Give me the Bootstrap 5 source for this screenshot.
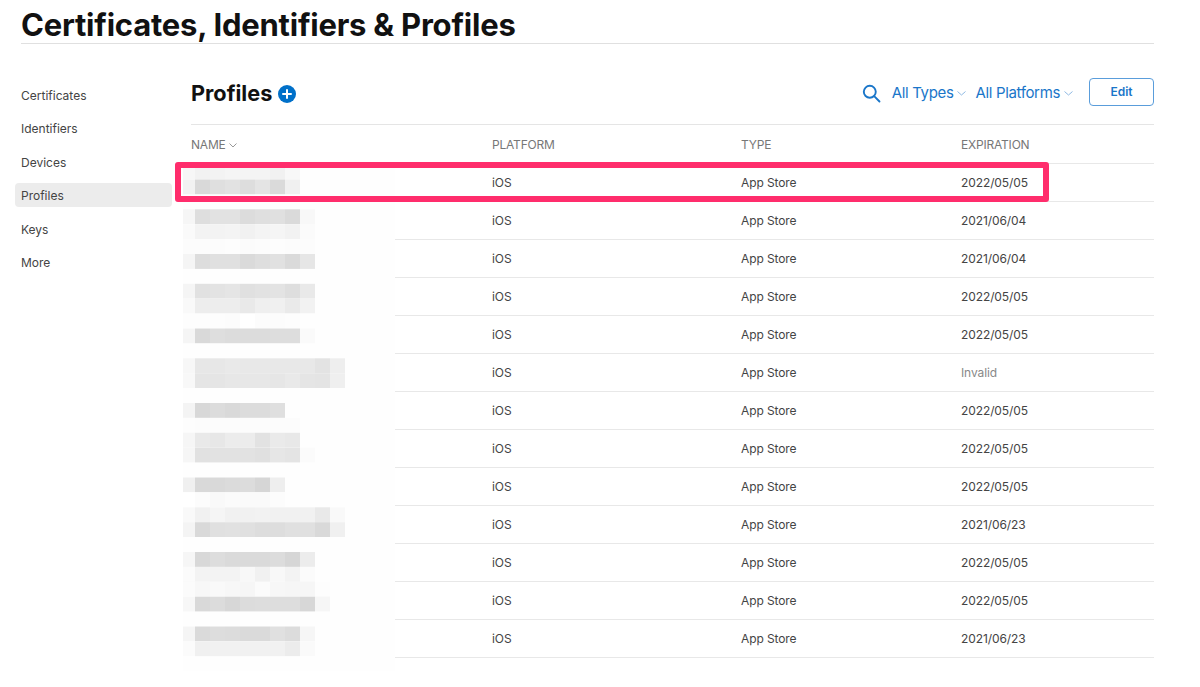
<!doctype html>
<html lang="en">
<head>
<meta charset="utf-8">
<title>Profiles</title>
<link href="https://cdn.jsdelivr.net/npm/bootstrap@5.3.0/dist/css/bootstrap.min.css" rel="stylesheet">
<style>
html,body{height:687px;overflow:hidden}
body{font-family:Inter,"Liberation Sans",sans-serif;color:#333;background:#fff}
.page-wrap{padding:0 46px 0 21px}
.top-title{height:44px;margin:0;border-bottom:1px solid #e0e0e0;font-size:31px;font-weight:700;line-height:50px;color:#111;letter-spacing:-.22px;white-space:nowrap;overflow:visible}
.side-col{width:170px;flex:none;padding-top:38.6px}
.side-item{display:block;height:24px;line-height:25px;margin:0 0 9.5px -6px;width:157px;padding-left:6px;border-radius:4px;font-size:12px;color:#444;text-decoration:none}
.side-item.is-on{background:#ececec}
.main-col{flex:1;min-width:0}
.main-head{height:81px;border-bottom:1px solid #e5e5e5;padding-top:34px}
.main-title{font-size:21.7px;font-weight:700;color:#111;margin:0;line-height:30px}
.plus-ic{margin:2px 0 0 -2px}
.filter-link{font-size:15px;letter-spacing:-.35px;color:#1a76c9;text-decoration:none;line-height:27px;white-space:nowrap}
.search-ic{margin-right:11px;margin-top:2px}
.caret-ic{margin:2px 0 0 4px}
.filter-gap{margin-left:9px}
.edit-btn{width:65px;height:28px;padding:0;margin-left:16px;font-size:12px;font-weight:600;color:#1a76c9;border:1px solid #5a9ddb;border-radius:4px;background:#fff}
.table-wrap{position:relative}
.prof-table{margin:0;table-layout:fixed;width:100%}
.prof-table th,.prof-table td{height:38px;padding:2px 0 0;vertical-align:middle;font-size:12px;border-bottom:1px solid #e8e8e8;box-shadow:none}
.prof-table th{font-weight:400;color:#777;letter-spacing:-.2px;padding-top:2px}
.prof-table td{color:#444;letter-spacing:-.1px}
.prof-table td.is-muted{color:#888}
.col-a{width:301px}.col-b{width:249px}.col-c{width:220px}
.mosaic{position:absolute;left:-8px;top:39px}
.hilite{position:absolute;left:-16px;top:37px;width:874px;height:40px;border:6.5px solid #ff2d6c;border-radius:3px}
</style>
</head>
<body>
<div class="page-wrap">
  <h1 class="top-title">Certificates, Identifiers &amp; Profiles</h1>
  <div class="d-flex">
    <nav class="side-col">
      <a class="side-item" href="#">Certificates</a>
      <a class="side-item" href="#">Identifiers</a>
      <a class="side-item" href="#">Devices</a>
      <a class="side-item is-on" href="#">Profiles</a>
      <a class="side-item" href="#">Keys</a>
      <a class="side-item" href="#">More</a>
    </nav>
    <main class="main-col">
      <div class="main-head d-flex align-items-start justify-content-between">
        <div class="d-flex align-items-center gap-2">
          <h2 class="main-title">Profiles</h2>
          <svg class="plus-ic" width="18" height="18" viewBox="0 0 18 18"><circle cx="9" cy="9" r="9" fill="#0070c9"/><path d="M9 5v8M5 9h8" stroke="#fff" stroke-width="2" stroke-linecap="round"/></svg>
        </div>
        <div class="d-flex align-items-center">
          <svg class="search-ic" width="19" height="19" viewBox="0 0 20 20" fill="none" stroke="#1a76c9" stroke-width="2" stroke-linecap="round"><circle cx="8.2" cy="8.2" r="6.3"/><path d="M12.8 12.8l5.6 5.6"/></svg>
          <a class="filter-link" href="#">All Types</a>
          <svg class="caret-ic" width="9" height="5" viewBox="0 0 9 5" fill="none" stroke="#8fb9e3"><path d="M.5.5l4 3.5 4-3.5"/></svg>
          <a class="filter-link filter-gap" href="#">All Platforms</a>
          <svg class="caret-ic" width="9" height="5" viewBox="0 0 9 5" fill="none" stroke="#8fb9e3"><path d="M.5.5l4 3.5 4-3.5"/></svg>
          <button class="btn edit-btn" type="button">Edit</button>
        </div>
      </div>
      <div class="table-wrap">
        <table class="table prof-table">
          <thead><tr>
            <th class="col-a">NAME <svg width="8" height="5" viewBox="0 0 8 5" fill="none" stroke="#999"><path d="M.5.5L4 4 7.5.5"/></svg></th>
            <th class="col-b">PLATFORM</th><th class="col-c">TYPE</th><th>EXPIRATION</th>
          </tr></thead>
          <tbody>
            <tr><td></td><td>iOS</td><td>App Store</td><td>2022/05/05</td></tr>
            <tr><td></td><td>iOS</td><td>App Store</td><td>2021/06/04</td></tr>
            <tr><td></td><td>iOS</td><td>App Store</td><td>2021/06/04</td></tr>
            <tr><td></td><td>iOS</td><td>App Store</td><td>2022/05/05</td></tr>
            <tr><td></td><td>iOS</td><td>App Store</td><td>2022/05/05</td></tr>
            <tr><td></td><td>iOS</td><td>App Store</td><td class="is-muted">Invalid</td></tr>
            <tr><td></td><td>iOS</td><td>App Store</td><td>2022/05/05</td></tr>
            <tr><td></td><td>iOS</td><td>App Store</td><td>2022/05/05</td></tr>
            <tr><td></td><td>iOS</td><td>App Store</td><td>2022/05/05</td></tr>
            <tr><td></td><td>iOS</td><td>App Store</td><td>2021/06/23</td></tr>
            <tr><td></td><td>iOS</td><td>App Store</td><td>2022/05/05</td></tr>
            <tr><td></td><td>iOS</td><td>App Store</td><td>2022/05/05</td></tr>
            <tr><td></td><td>iOS</td><td>App Store</td><td>2021/06/23</td></tr>
          </tbody>
        </table>
        <svg id="mosaic" class="mosaic" width="212" height="508" viewBox="0 0 212 508" aria-hidden="true"></svg>
        <div class="hilite"></div>
      </div>
    </main>
  </div>
</div>
<script>
var rows=["f7 f2 f3 f5 f4 f4 f1 f8","f2 d9 df e2 dd e4 da f0","","f6 de e2 e2 dc df e0 da f8","fa f3 f3 f4 f1 f4 f5 f2 fb","fc fc fc fd fb fc fd fc fc","f5 dd e0 e0 da de e1 da e6","","f5 e1 e3 e5 e0 e2 e3 de e9","f9 ed ed ed e9 ef f0 ea f2","fd fd fd fc ff fc fc fd fe","f5 d9 de dc dc dc dd dd fa","","f7 e7 e7 e9 e8 e8 e8 e8 e8 e3 ee","f8 e5 e5 e7 e7 e7 e6 e9 e5 e4 ef","","f4 d8 dc d9 dc dc df","fd fc fc fc fc fc fc fc","f6 e9 e7 ec ec e2 ea e8","f6 e1 e2 e2 e2 e0 e6 e4 fb","","f0 d9 d9 db dc d6 ee","ff fc f9 fb fa fa fc","f9 f1 f5 f1 f1 f2 f1 f1 f1 e9 f9","f4 d9 e0 e1 e0 dd dd e0 e0 d9 f0","","f6 d8 dd da da da dc d6 ec","fb f3 f3 f3 f8 f1 f8 f3 fb","fb f7 f9 f7 f6 fb f7 f6 f6 fd","f7 d9 dc d7 dc dd dd dd d7 f6","","f5 da dd dc da da e0 dc f6","fb f0 f1 f1 f1 f1 f1 ec fa",""];
var s='<rect width="212" height="508" fill="#fff"/>';
rows.forEach(function(r,k){
  var y=(k*14.9+.6).toFixed(1);
  s+='<rect x="0" y="'+y+'" width="212" height="15" fill="#fefefe"/>';
  if(r) r.split(" ").forEach(function(c,i){
    var x=i?12+(i-1)*15:0,w=i?15:12;
    s+='<rect x="'+x+'" y="'+y+'" width="'+w+'" height="15" fill="#'+c+c+c+'"/>';
  });
});
document.getElementById("mosaic").innerHTML=s;
</script>
<script src="https://cdn.jsdelivr.net/npm/bootstrap@5.3.0/dist/js/bootstrap.bundle.min.js"></script>
</body>
</html>
